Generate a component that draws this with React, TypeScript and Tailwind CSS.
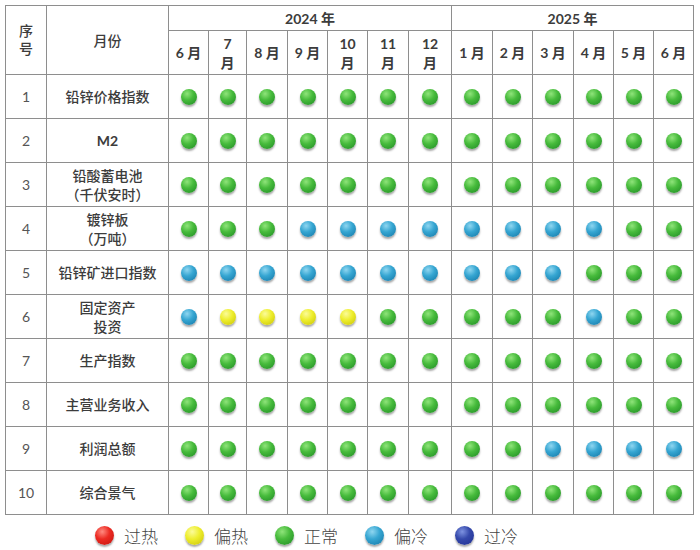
import React from "react";

type C = "g" | "b" | "y" | "r" | "d";

const dotCls: Record<C, string> = {
  g: "bg-[radial-gradient(circle_at_38%_30%,#8fe47a_0%,#47bb3c_42%,#2c9a2c_80%,#1f7a22_100%)]",
  b: "bg-[radial-gradient(circle_at_38%_30%,#8fd6f0_0%,#36a6d2_42%,#1f86b4_80%,#146690_100%)]",
  y: "bg-[radial-gradient(circle_at_38%_30%,#fbfb9a_0%,#eeee2e_42%,#d4d012_80%,#a8a000_100%)]",
  r: "bg-[radial-gradient(circle_at_38%_30%,#ff8a80_0%,#ec2a22_42%,#d01a14_80%,#a00e0a_100%)]",
  d: "bg-[radial-gradient(circle_at_38%_30%,#7d92e0_0%,#3549ab_42%,#26379a_80%,#1a2775_100%)]",
};

function Dot({ c, big }: { c: C; big?: boolean }) {
  return (
    <span
      className={`inline-block rounded-full shadow-[0_2px_2px_rgba(0,0,0,0.35)] ${
        big ? "w-[19px] h-[19px]" : "w-[16px] h-[16px]"
      } ${dotCls[c]}`}
    />
  );
}

const rows: { n: string; label: React.ReactNode; data: string }[] = [
  { n: "1", label: "铅锌价格指数", data: "ggggggggggggg" },
  { n: "2", label: <span className="font-bold text-[14px]">M2</span>, data: "ggggggggggggg" },
  { n: "3", label: <>铅酸蓄电池<br />（千伏安时）</>, data: "ggggggggggggg" },
  { n: "4", label: <>镀锌板<br />（万吨）</>, data: "gggbbbbbbbbgg" },
  { n: "5", label: "铅锌矿进口指数", data: "bbbbbbbbbbggg" },
  { n: "6", label: <>固定资产<br />投资</>, data: "byyyygggggbgg" },
  { n: "7", label: "生产指数", data: "ggggggggggggg" },
  { n: "8", label: "主营业务收入", data: "ggggggggggggg" },
  { n: "9", label: "利润总额", data: "ggggggggggbbbb" .slice(0, 13) },
  { n: "10", label: "综合景气", data: "ggggggggggggg" },
];
rows[8].data = "gggggggggbbbb";

const months: React.ReactNode[] = [
  "6 月",
  <>7<br />月</>,
  "8 月",
  "9 月",
  <>10<br />月</>,
  <>11<br />月</>,
  <>12<br />月</>,
  "1 月",
  "2 月",
  "3 月",
  "4 月",
  "5 月",
  "6 月",
];

const cell = "bg-white flex items-center justify-center text-center";

export default function App() {
  return (
    <div className="w-[700px] h-[550px] bg-white text-[#3c3c3c] font-['Lato','Noto_Sans_CJK_SC',sans-serif] pt-[5px] pl-[5px]">
      <div className="grid w-fit bg-[#8e8e8e] p-px gap-px grid-cols-[40px_121px_39px_37px_40px_39px_39px_40px_42px_40px_39px_40px_39px_39px_39px] grid-rows-[24px_43px_repeat(10,43px)]">
        <div className={`${cell} row-span-2 text-[14px] leading-[18px] font-medium`}>
          序<br />号
        </div>
        <div className={`${cell} row-span-2 text-[14px] font-medium`}>月份</div>
        <div className={`${cell} col-span-7 text-[14px] font-bold`}>2024 年</div>
        <div className={`${cell} col-span-6 text-[14px] font-bold`}>2025 年</div>
        {months.map((m, i) => (
          <div key={i} className={`${cell} text-[14px] font-bold leading-[19px]`}>
            {m}
          </div>
        ))}
        {rows.map((r) => (
          <React.Fragment key={r.n}>
            <div className={`${cell} text-[14px] text-[#555]`}>{r.n}</div>
            <div className={`${cell} text-[14px] font-medium leading-[19px]`}>{r.label}</div>
            {r.data.split("").map((c, i) => (
              <div key={i} className={cell}>
                <Dot c={c as C} />
              </div>
            ))}
          </React.Fragment>
        ))}
      </div>
      <div className="flex items-center pl-[90px] pt-[8px] gap-[27px] text-[17px] text-[#444]">
        {([
          ["r", "过热"],
          ["y", "偏热"],
          ["g", "正常"],
          ["b", "偏冷"],
          ["d", "过冷"],
        ] as [C, string][]).map(([c, t]) => (
          <div key={t} className="flex items-center gap-[10px]">
            <Dot c={c} big />
            <span className="font-['Noto_Sans_CJK_SC',sans-serif] font-light">{t}</span>
          </div>
        ))}
      </div>
    </div>
  );
}
